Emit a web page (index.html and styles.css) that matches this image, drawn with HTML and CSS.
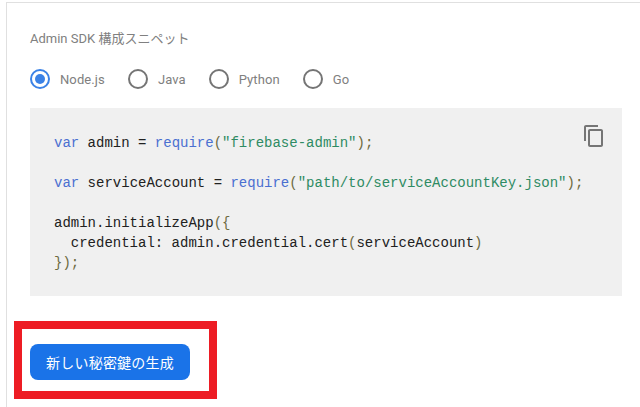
FILE: index.html
```html
<!DOCTYPE html>
<html lang="ja">
<head>
<meta charset="utf-8">
<title>Admin SDK</title>
<link rel="stylesheet" href="styles.css">
</head>
<body>
<main class="panel">
  <h2 class="label">Admin SDK 構成スニペット</h2>
  <div class="radios">
    <label class="radio radio-on"><span class="dot"></span><span>Node.js</span></label>
    <label class="radio"><span class="dot"></span><span>Java</span></label>
    <label class="radio"><span class="dot"></span><span>Python</span></label>
    <label class="radio"><span class="dot"></span><span>Go</span></label>
  </div>
  <div class="code-box">
    <svg class="copy" width="24" height="24" viewBox="0 0 24 24"><path fill="#757575" d="M16 1H4c-1.1 0-2 .9-2 2v14h2V3h12V1zm3 4H8c-1.1 0-2 .9-2 2v14c0 1.1.9 2 2 2h11c1.1 0 2-.9 2-2V7c0-1.100-.9-2-2-2zm0 16H8V7h11v14z"/></svg>
<pre class="code"><span class="kw">var</span> admin = <span class="kw">require</span><span class="pn">(</span><span class="str">"firebase-admin"</span><span class="pn">);</span>

<span class="kw">var</span> serviceAccount = <span class="kw">require</span><span class="pn">(</span><span class="str">"path/to/serviceAccountKey.json"</span><span class="pn">);</span>

admin.initializeApp<span class="pn">({</span>
  credential: admin.credential.cert<span class="pn">(</span>serviceAccount<span class="pn">)</span>
<span class="pn">});</span></pre>
  </div>
  <div class="highlight">
    <button class="generate" type="button">新しい秘密鍵の生成</button>
  </div>
</main>
</body>
</html>
```
FILE: styles.css
```css
html, body {
  margin: 0;
  height: 407px;
  overflow: hidden;
  background: #fff;
}
body {
  padding: 2px 0 0 6px;
  box-sizing: border-box;
  font-family: Roboto, "Noto Sans CJK JP", sans-serif;
}
.panel {
  height: 405px;
  box-sizing: border-box;
  border-top: 1px solid #e0e0e0;
  border-left: 1px solid #e0e0e0;
  padding: 27px 18px 0 23px;
}
.label {
  margin: 0;
  font-size: 13px;
  font-weight: 400;
  line-height: 18px;
  color: #808080;
}
.radios {
  display: flex;
  margin-top: 21px;
  height: 20px;
  align-items: center;
}
.radio {
  display: flex;
  align-items: center;
  gap: 10px;
  margin-right: 23px;
  font-size: 13px;
  letter-spacing: 0.1px;
  color: #808080;
}
.dot {
  width: 20px;
  height: 20px;
  box-sizing: border-box;
  border: 2px solid #757575;
  border-radius: 50%;
  display: flex;
  align-items: center;
  justify-content: center;
}
.radio-on .dot {
  border-color: #3b82e6;
}
.radio-on .dot::after {
  content: "";
  width: 10px;
  height: 10px;
  border-radius: 50%;
  background: #3b82e6;
}
.code-box {
  position: relative;
  margin-top: 19px;
  height: 188px;
  box-sizing: border-box;
  background: #f0f0f0;
  padding: 25px 24px 0;
}
.copy {
  position: absolute;
  top: 16px;
  right: 16px;
}
.code {
  margin: 0;
  font-family: "Liberation Mono", monospace;
  font-size: 14px;
  line-height: 20px;
  color: #212121;
}
.kw { color: #4a6fd0; }
.str { color: #2e8b63; }
.pn { color: #6d6a3f; }
.highlight {
  margin: 25px 0 0 -16px;
  width: 203px;
  height: 78px;
  box-sizing: border-box;
  border: 8px solid #ed1c24;
  padding: 15px 8px;
}
.generate {
  display: block;
  width: 160px;
  height: 36px;
  border: 0;
  border-radius: 8px;
  background: #1a73e8;
  color: #fff;
  font-family: "Noto Sans CJK JP", sans-serif;
  font-size: 14px;
  letter-spacing: 0.2px;
  padding: 0;
}
```
